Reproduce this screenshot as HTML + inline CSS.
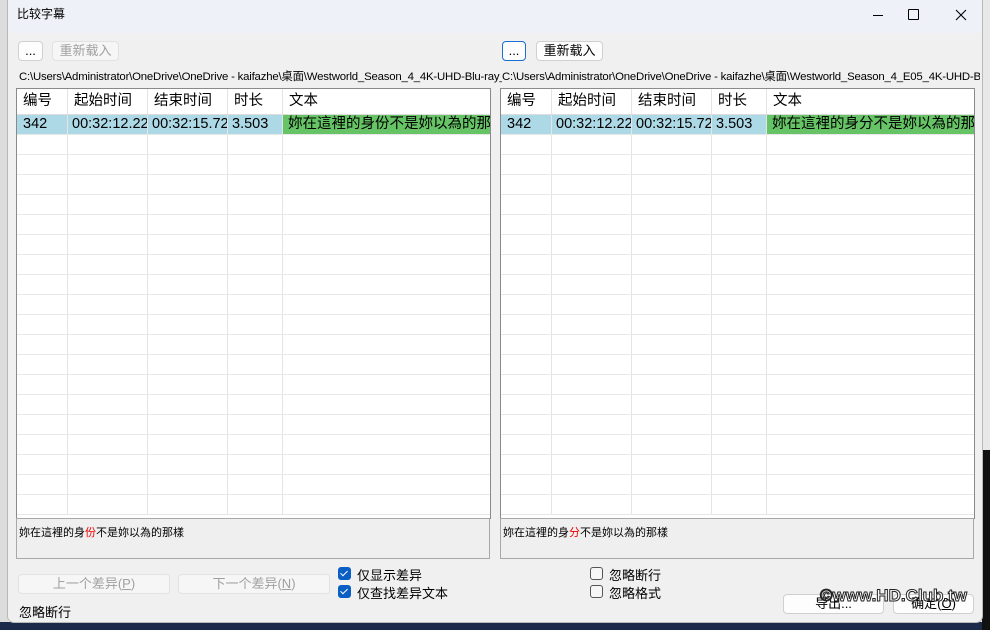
<!DOCTYPE html>
<html><head><meta charset="utf-8"><style>
*{margin:0;padding:0;box-sizing:border-box}
body{width:990px;height:630px;overflow:hidden;position:relative;background:#e8e8e8;font-family:"Liberation Sans","Noto Sans CJK SC",sans-serif;font-size:12px;color:#000}
.abs{position:absolute}
.win{left:7px;top:-1px;width:976px;height:624px;background:#f0f0f0;border:1px solid #b8b8b8;border-radius:0 0 7px 7px}
.title{left:0;top:0;width:974px;height:33px;background:#eef2f8}
.btn{position:absolute;border:1px solid #d0d0d0;background:#fdfdfd;border-radius:4px;text-align:center;font-size:13px;line-height:18px}
.dis{color:#a0a0a0;background:#f6f6f6;border-color:#e2e2e2}
.grid{position:absolute;background:#fff;border:1px solid #8a8a8a;overflow:hidden}
.row{position:absolute;left:0;right:0;height:20px;border-bottom:1px solid #e8e8e8}
.c{position:absolute;top:0;height:100%;border-right:1px solid #e4e4e4;font-size:14.5px;padding-left:6px;white-space:nowrap;overflow:hidden}
.prev{position:absolute;background:#efefef;border:1px solid #a8a8a8;font-size:11px;padding:5px 2px}
.cb{position:absolute;width:13px;height:13px;border-radius:3px;background:#0a5fc4}
.cb::after{content:"";position:absolute;left:4px;top:1.5px;width:3px;height:6px;border:solid #fff;border-width:0 1.5px 1.5px 0;transform:rotate(45deg)}
.cbo{position:absolute;width:13px;height:13px;border-radius:3px;border:1px solid #555;background:#f6f6f6}
.lbl{position:absolute;font-size:13px}
</style></head><body>
<div class="abs" style="left:0;top:0;width:8px;height:630px;background:#dcdcdc"></div>
<div class="abs" style="left:0;top:622px;width:990px;height:8px;background:#1b2a4a"></div>
<div class="abs" style="left:982px;top:450px;width:8px;height:180px;background:#111"></div>
<div class="abs win">
 <div class="abs title"></div>
 <div class="abs" style="left:9px;top:5px;font-size:12px">比较字幕</div>
 <div class="abs" style="left:865px;top:15px;width:10px;height:1px;background:#000"></div>
 <div class="abs" style="left:900px;top:9px;width:11px;height:11px;border:1px solid #000;border-radius:1px"></div>
 <svg class="abs" style="left:947px;top:9px" width="12" height="12"><path d="M1 1L11 11M11 1L1 11" stroke="#000" stroke-width="1.1"/></svg>

 <div class="btn" style="left:10px;top:41px;width:25px;height:20px">...</div>
 <div class="btn dis" style="left:44px;top:41px;width:67px;height:20px">重新载入</div>
 <div class="btn" style="left:494px;top:41px;width:24px;height:20px;border-color:#1a6fd0">...</div>
 <div class="btn" style="left:528px;top:41px;width:67px;height:20px">重新载入</div>
 <div class="abs" style="left:11px;top:68px;font-size:11.4px;letter-spacing:-0.2px;white-space:nowrap;width:483px;overflow:hidden">C:\Users\Administrator\OneDrive\OneDrive - kaifazhe\桌面\Westworld_Season_4_4K-UHD-Blu-ray_</div>
 <div class="abs" style="left:494px;top:68px;font-size:11.4px;letter-spacing:-0.2px;white-space:nowrap;width:478px;overflow:hidden">C:\Users\Administrator\OneDrive\OneDrive - kaifazhe\桌面\Westworld_Season_4_E05_4K-UHD-Blu</div>

 <div class="grid" style="left:8px;top:88px;width:475px;height:431px">
  <div class="row" style="top:0;height:26px;border-color:#ddd">
   <div class="c" style="left:0;width:51px;line-height:25px">编号</div><div class="c" style="left:51px;width:80px;line-height:25px">起始时间</div><div class="c" style="left:131px;width:80px;line-height:25px">结束时间</div><div class="c" style="left:211px;width:55px;line-height:25px">时长</div><div class="c" style="left:266px;width:209px;line-height:25px">文本</div>
  </div>
  <div class="row" style="top:26px;background:#add8e6">
   <div class="c" style="left:0;width:51px;line-height:19px">342</div><div class="c" style="left:51px;width:80px;line-height:19px;padding-left:4px">00:32:12.22</div><div class="c" style="left:131px;width:80px;line-height:19px;padding-left:4px">00:32:15.72</div><div class="c" style="left:211px;width:55px;line-height:19px;padding-left:4px">3.503</div><div class="c" style="left:266px;width:208px;line-height:19px;background:#66c466;padding-left:5px">妳在這裡的身份不是妳以為的那樣</div>
  </div>
  <div id="lr"></div>
 </div>
 <div class="prev" style="left:8px;top:518px;width:474px;height:41px">妳在這裡的身<span style="color:#e00">份</span>不是妳以為的那樣</div>

 <div class="grid" style="left:492px;top:88px;width:475px;height:431px">
  <div class="row" style="top:0;height:26px;border-color:#ddd">
   <div class="c" style="left:0;width:51px;line-height:25px">编号</div><div class="c" style="left:51px;width:80px;line-height:25px">起始时间</div><div class="c" style="left:131px;width:80px;line-height:25px">结束时间</div><div class="c" style="left:211px;width:55px;line-height:25px">时长</div><div class="c" style="left:266px;width:209px;line-height:25px">文本</div>
  </div>
  <div class="row" style="top:26px;background:#add8e6">
   <div class="c" style="left:0;width:51px;line-height:19px">342</div><div class="c" style="left:51px;width:80px;line-height:19px;padding-left:4px">00:32:12.22</div><div class="c" style="left:131px;width:80px;line-height:19px;padding-left:4px">00:32:15.72</div><div class="c" style="left:211px;width:55px;line-height:19px;padding-left:4px">3.503</div><div class="c" style="left:266px;width:208px;line-height:19px;background:#66c466;padding-left:5px">妳在這裡的身分不是妳以為的那樣</div>
  </div>
  <div id="rr"></div>
 </div>
 <div class="prev" style="left:492px;top:518px;width:474px;height:41px">妳在這裡的身<span style="color:#e00">分</span>不是妳以為的那樣</div>

 <div class="btn dis" style="left:10px;top:574px;width:152px;height:20px">上一个差异(<u>P</u>)</div>
 <div class="btn dis" style="left:170px;top:574px;width:152px;height:20px">下一个差异(<u>N</u>)</div>
 <div class="cb" style="left:330px;top:567px"></div><div class="lbl" style="left:349px;top:565px">仅显示差异</div>
 <div class="cb" style="left:330px;top:585px"></div><div class="lbl" style="left:349px;top:583px">仅查找差异文本</div>
 <div class="cbo" style="left:582px;top:567px"></div><div class="lbl" style="left:601px;top:565px">忽略断行</div>
 <div class="cbo" style="left:582px;top:585px"></div><div class="lbl" style="left:601px;top:583px">忽略格式</div>
 <div class="lbl" style="left:11px;top:602px">忽略断行</div>
 <div class="btn" style="left:775px;top:594px;width:101px;height:20px">导出...</div>
 <div class="btn" style="left:885px;top:594px;width:81px;height:20px">确定(<u>O</u>)</div>
 <div class="abs" style="left:812px;top:586px;font-size:17px;font-weight:bold;color:#fff;-webkit-text-stroke:1px #222">©www.HD.Club.tw</div>
</div>
<script>
function fill(id){var h='';for(var i=0;i<19;i++){var t=46+i*20;h+='<div class="row" style="top:'+t+'px"><div class="c" style="left:0;width:51px"></div><div class="c" style="left:51px;width:80px"></div><div class="c" style="left:131px;width:80px"></div><div class="c" style="left:211px;width:55px"></div></div>';}document.getElementById(id).outerHTML=h;}
fill('lr');fill('rr');
</script>
</body></html>
